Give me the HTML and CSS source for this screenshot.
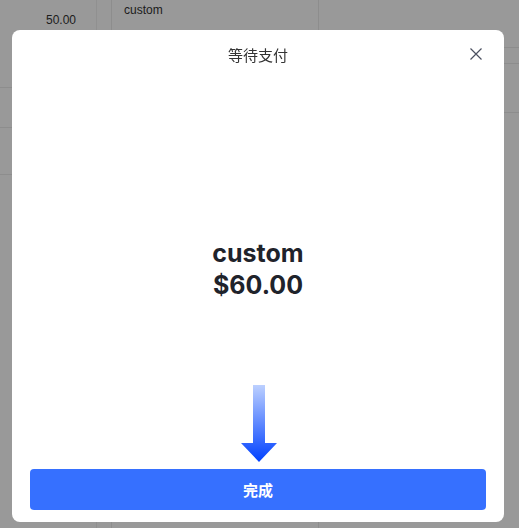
FILE: index.html
```html
<!DOCTYPE html>
<html lang="zh">
<head>
<meta charset="utf-8">
<title>等待支付</title>
<link rel="stylesheet" href="styles.css">
</head>
<body>
<div class="page">
  <div class="col col-a">
    <div class="cell cell-a1"><span class="num">50.00</span></div>
    <div class="cell cell-a2"></div>
    <div class="cell cell-a3"></div>
  </div>
  <div class="col col-b"></div>
  <div class="col col-c">
    <div class="cell cell-c1"><span class="txt">custom</span></div>
  </div>
  <div class="col col-d">
    <div class="cell cell-d1"></div>
    <div class="cell cell-d2"></div>
    <div class="cell cell-d3"></div>
  </div>
</div>
<div class="overlay"></div>
<div class="modal">
  <div class="modal-header">
    <span class="modal-title">等待支付</span>
    <button class="close" aria-label="关闭">
      <svg width="14" height="14" viewBox="0 0 14 14"><path d="M1.5 1.5 L12.5 12.5 M12.5 1.5 L1.5 12.5" stroke="#4b5060" stroke-width="1.2" fill="none"/></svg>
    </button>
  </div>
  <div class="modal-body">
    <div class="amount">
      <div class="line">custom</div>
      <div class="line">$60.00</div>
    </div>
  </div>
  <div class="arrow">
    <svg width="38" height="77" viewBox="0 0 38 77">
      <defs>
        <linearGradient id="g" x1="0" y1="0" x2="0" y2="1">
          <stop offset="0" stop-color="#bcd0ff"/>
          <stop offset="1" stop-color="#0040ff"/>
        </linearGradient>
      </defs>
      <path d="M13 0 H25 V58 H37 L19 77 L1 58 H13 Z" fill="url(#g)"/>
    </svg>
  </div>
  <button class="done">完成</button>
</div>
</body>
</html>
```
FILE: styles.css
```css
html, body {
  margin: 0;
  padding: 0;
  height: 100%;
  overflow: hidden;
  background: #fff;
  font-family: Inter, "Noto Sans CJK SC", sans-serif;
}
.page {
  display: flex;
  height: 528px;
}
.col {
  display: flex;
  flex-direction: column;
}
.col-a { width: 96px; }
.col-b { width: 14px; border-left: 1px solid #f0f0f0; }
.col-c { width: 206px; border-left: 1px solid #ebebeb; border-right: 1px solid #ebebeb; }
.col-d { flex: 1; }
.cell { border-bottom: 1px solid #ebebeb; box-sizing: border-box; }
.cell-a1 { height: 88px; display: flex; justify-content: flex-end; padding: 13px 20px 0 0; }
.cell-a2 { height: 40px; }
.cell-a3 { height: 47px; }
.cell-c1 { height: 30px; border-bottom: none; padding: 2px 0 0 12px; line-height: 12px; }
.cell-d1 { height: 48px; }
.cell-d2 { height: 16px; }
.cell-d3 { height: 49px; }
.num, .txt {
  font-family: "Liberation Sans", Arial, sans-serif;
  font-size: 12px;
  color: #333;
}
.overlay {
  position: fixed;
  inset: 0;
  background: rgba(0, 0, 0, 0.4);
}
.modal {
  position: fixed;
  left: 12px;
  top: 30px;
  width: 492px;
  height: 492px;
  background: #fff;
  border-radius: 8px;
  display: flex;
  flex-direction: column;
  box-sizing: border-box;
  padding: 0 18px 12px;
}
.modal-header {
  height: 48px;
  display: flex;
  align-items: center;
  justify-content: center;
  position: relative;
}
.modal-title {
  font-family: "Noto Sans CJK SC", sans-serif;
  font-size: 15px;
  color: #333;
}
.close {
  position: absolute;
  right: 3px;
  top: 17px;
  width: 14px;
  height: 14px;
  padding: 0;
  border: none;
  background: none;
  display: flex;
}
.modal-body {
  flex: 1;
  display: flex;
  flex-direction: column;
  justify-content: flex-end;
  align-items: center;
  padding-bottom: 84px;
}
.amount {
  text-align: center;
  font-family: Inter, sans-serif;
  font-weight: 700;
  font-size: 25px;
  line-height: 32px;
  color: #1f232b;
}
.arrow {
  display: flex;
  justify-content: center;
  height: 77px;
  margin-bottom: 7px;
  padding-left: 2px;
}
.done {
  height: 41px;
  border: none;
  border-radius: 4px;
  background: #3670ff;
  color: #fff;
  font-family: "Noto Sans CJK SC", sans-serif;
  font-size: 15px;
  font-weight: 700;
  padding: 0;
}
```
